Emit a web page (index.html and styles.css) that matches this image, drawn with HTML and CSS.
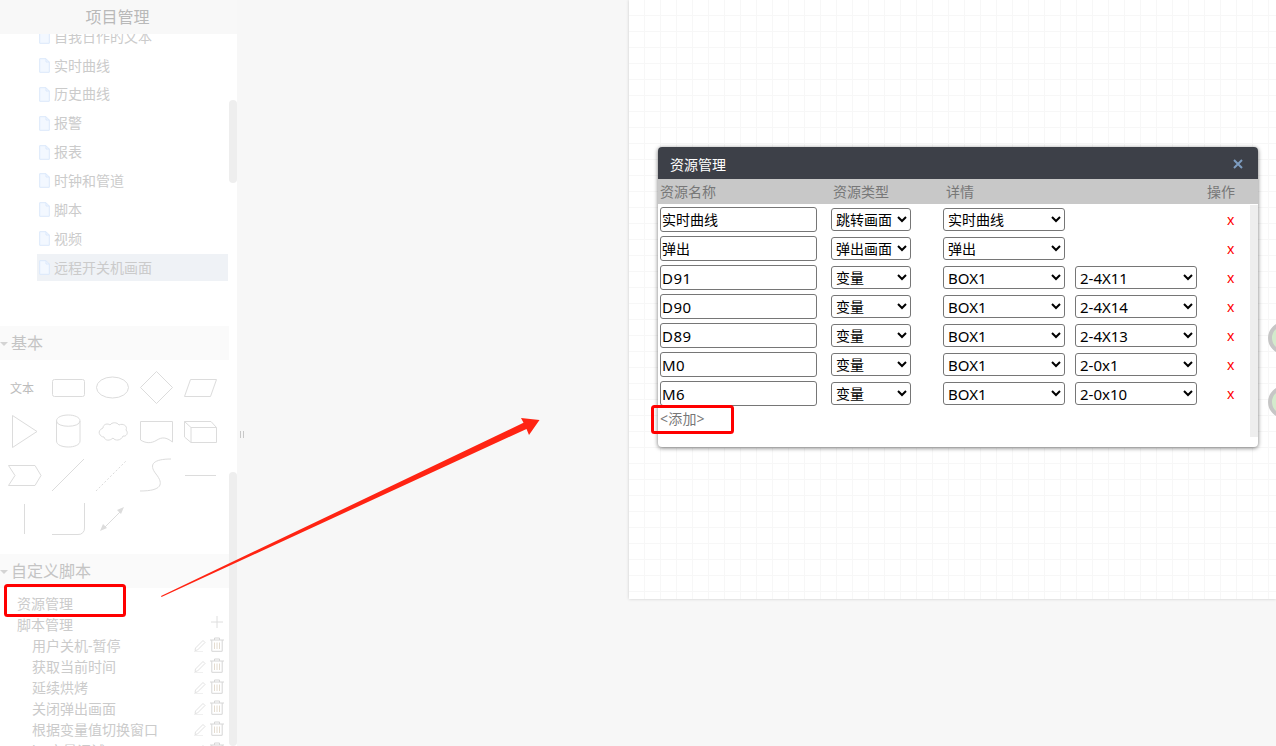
FILE: index.html
```html
<!DOCTYPE html>
<html lang="zh">
<head>
<meta charset="utf-8">
<title>资源管理</title>
<link rel="stylesheet" href="styles.css">
</head>
<body>
<svg class="defs" width="0" height="0" aria-hidden="true">
  <symbol id="doc" viewBox="0 0 11 15"><path d="M.7.7H7L10.3 4V14.3H.7Z" fill="#f3f8ff" stroke="#dbe8fb"/><path d="M7 .7V4H10.3" fill="none" stroke="#dbe8fb"/></symbol>
  <symbol id="pencil" viewBox="0 0 12 14"><path d="M1.5 10 9 2.5l2 2L3.500 12 1 12.500Z" fill="none" stroke="#e2e2e2"/><path d="M0 13.500H9" stroke="#f0f0f0"/></symbol>
  <symbol id="trash" viewBox="0 0 14 15"><path d="M0 3H14M4.500 3V1H9.500V3M1.800 3V14.300H12.200V3" fill="none" stroke="#d6d6d6"/><path d="M4.500 5.500V12M7 5.500V12M9.500 5.500V12" stroke="#e4dcd0"/></symbol>
</svg>
<div class="app">
  <aside class="sidebar">
    <header class="project-title">项目管理</header>
    <section class="tree">
      <ul class="tree-list">
        <li class="tree-item"><svg class="doc"><use href="#doc"/></svg>自我日作的文本</li>
        <li class="tree-item"><svg class="doc"><use href="#doc"/></svg>实时曲线</li>
        <li class="tree-item"><svg class="doc"><use href="#doc"/></svg>历史曲线</li>
        <li class="tree-item"><svg class="doc"><use href="#doc"/></svg>报警</li>
        <li class="tree-item"><svg class="doc"><use href="#doc"/></svg>报表</li>
        <li class="tree-item"><svg class="doc"><use href="#doc"/></svg>时钟和管道</li>
        <li class="tree-item"><svg class="doc"><use href="#doc"/></svg>脚本</li>
        <li class="tree-item"><svg class="doc"><use href="#doc"/></svg>视频</li>
        <li class="tree-item active"><svg class="doc"><use href="#doc"/></svg>远程开关机画面</li>
      </ul>
    </section>
    <h2 class="group-head"><span class="caret"></span>基本</h2>
    <div class="shapes">
      <div class="shape shape-text">文本</div>
      <svg class="shape" viewBox="0 0 44 44"><rect x="6.500" y="13.500" width="32" height="17" rx="2"/></svg>
      <svg class="shape" viewBox="0 0 44 44"><ellipse cx="22.500" cy="21.500" rx="16" ry="10.500"/></svg>
      <svg class="shape" viewBox="0 0 44 44"><path d="M6.500 21.500 22.500 5.500 38.500 21.500 22.500 37.500Z"/></svg>
      <svg class="shape" viewBox="0 0 44 44"><path d="M12.500 13.500H38.500L32.500 30.500H6.500Z"/></svg>

      <svg class="shape" viewBox="0 0 44 44"><path d="M10.500 5.500 35 21.500 10.500 37.500Z"/></svg>
      <svg class="shape" viewBox="0 0 44 44"><path d="M10.500 11V31C10.500 39 34 39 34 31V11C34 3 10.500 3 10.500 11C10.500 18 34 18 34 11"/></svg>
      <svg class="shape" viewBox="0 0 44 44"><path d="M13 18C13 14 18 13 20 15C22 12 27 12 29 15C33 13 38 16 36 20C39 23 36 27 33 26C31 31 25 31 23 28C20 31 15 31 14 27C10 27 6 21 13 18Z"/></svg>
      <svg class="shape" viewBox="0 0 44 44"><path d="M6.500 11.500H38.500V32C32 27 28 27 23 30C17 34 11 33 6.500 30Z"/></svg>
      <svg class="shape" viewBox="0 0 44 44"><path d="M6.500 11.500H33L38.500 17.500V32.500H13L6.500 27ZM6.500 11.500 13 17.500H38.500M13 17.500V32.500"/></svg>

      <svg class="shape" viewBox="0 0 44 44"><path d="M6.500 11.500H33L39 21.500 33 31.500H6.500L13 21.500Z"/></svg>
      <svg class="shape" viewBox="0 0 44 44"><path d="M6 37 38 5"/></svg>
      <svg class="shape" viewBox="0 0 44 44"><path stroke-dasharray="2 2" d="M6 37 37 6"/></svg>
      <svg class="shape" viewBox="0 0 44 44"><path d="M6 37C28 37 30 30 22 20C14 10 20 5 37 5"/></svg>
      <svg class="shape" viewBox="0 0 44 44"><path d="M7 21.500H38"/></svg>

      <svg class="shape" viewBox="0 0 44 44"><path d="M22.500 6V36"/></svg>
      <svg class="shape" viewBox="0 0 44 44"><path d="M6 36.500H32A6 6 0 0 0 38.500 30V5"/></svg>
      <svg class="shape" viewBox="0 0 44 44"><path d="M13 31 31 13"/><path class="solid" d="M34 9 27 12 31 16ZM10 33 17 30 13 26Z"/></svg>
    </div>
    <h2 class="group-head"><span class="caret"></span>自定义脚本</h2>
    <ul class="scripts">
      <li class="script-root">资源管理</li>
      <li class="script-root">脚本管理<svg class="plus" viewBox="0 0 12 12"><path d="M6 0V12M0 6H12"/></svg></li>
      <li class="script-item">用户关机-暂停<span class="tools"><svg class="pencil"><use href="#pencil"/></svg><svg class="trash"><use href="#trash"/></svg></span></li>
      <li class="script-item">获取当前时间<span class="tools"><svg class="pencil"><use href="#pencil"/></svg><svg class="trash"><use href="#trash"/></svg></span></li>
      <li class="script-item">延续烘烤<span class="tools"><svg class="pencil"><use href="#pencil"/></svg><svg class="trash"><use href="#trash"/></svg></span></li>
      <li class="script-item">关闭弹出画面<span class="tools"><svg class="pencil"><use href="#pencil"/></svg><svg class="trash"><use href="#trash"/></svg></span></li>
      <li class="script-item">根据变量值切换窗口<span class="tools"><svg class="pencil"><use href="#pencil"/></svg><svg class="trash"><use href="#trash"/></svg></span></li>
      <li class="script-item">bo变量调试<span class="tools"><svg class="pencil"><use href="#pencil"/></svg><svg class="trash"><use href="#trash"/></svg></span></li>
    </ul>
    <div class="thumb thumb-top"></div>
    <div class="thumb thumb-bottom"></div>
  </aside>
  <main class="stage">
    <div class="splitter"></div>
    <div class="canvas">
      <span class="node node-a"></span>
      <span class="node node-b"></span>
      <div class="modal">
        <div class="modal-title"><span>资源管理</span>
          <svg class="modal-close" viewBox="0 0 10 10"><path d="M1 1 9 9M9 1 1 9"/></svg>
        </div>
        <div class="res-row res-head">
          <span>资源名称</span><span class="pad">资源类型</span><span class="pad2">详情</span><span></span><span>操作</span>
        </div>
        <div class="modal-body">
          <div class="res-row">
            <input class="res-name" value="实时曲线">
            <select class="res-type"><option>跳转画面</option></select>
            <select class="res-sel"><option>实时曲线</option></select>
            <span></span><span class="del">x</span>
          </div>
          <div class="res-row">
            <input class="res-name" value="弹出">
            <select class="res-type"><option>弹出画面</option></select>
            <select class="res-sel"><option>弹出</option></select>
            <span></span><span class="del">x</span>
          </div>
          <div class="res-row">
            <input class="res-name latin" value="D91">
            <select class="res-type"><option>变量</option></select>
            <select class="res-sel latin"><option>BOX1</option></select>
            <select class="res-sel latin"><option>2-4X11</option></select>
            <span class="del">x</span>
          </div>
          <div class="res-row">
            <input class="res-name latin" value="D90">
            <select class="res-type"><option>变量</option></select>
            <select class="res-sel latin"><option>BOX1</option></select>
            <select class="res-sel latin"><option>2-4X14</option></select>
            <span class="del">x</span>
          </div>
          <div class="res-row">
            <input class="res-name latin" value="D89">
            <select class="res-type"><option>变量</option></select>
            <select class="res-sel latin"><option>BOX1</option></select>
            <select class="res-sel latin"><option>2-4X13</option></select>
            <span class="del">x</span>
          </div>
          <div class="res-row">
            <input class="res-name latin" value="M0">
            <select class="res-type"><option>变量</option></select>
            <select class="res-sel latin"><option>BOX1</option></select>
            <select class="res-sel latin"><option>2-0x1</option></select>
            <span class="del">x</span>
          </div>
          <div class="res-row">
            <input class="res-name latin" value="M6">
            <select class="res-type"><option>变量</option></select>
            <select class="res-sel latin"><option>BOX1</option></select>
            <select class="res-sel latin"><option>2-0x10</option></select>
            <span class="del">x</span>
          </div>
          <div class="res-add">&lt;添加&gt;</div>
          <div class="modal-scroll"></div>
        </div>
      </div>
    </div>
  </main>
</div>
<svg class="annotations" viewBox="0 0 1276 746" aria-hidden="true">
  <rect class="mark" x="5.500" y="585.500" width="119" height="30" rx="2"/>
  <rect class="mark" x="652.500" y="406.500" width="80" height="26" rx="2"/>
  <polygon class="arrow" points="161,596 523.500,422.800 521,418 539.500,420 529,435 526.500,429 161.500,597"/>
</svg>
</body>
</html>
```
FILE: styles.css
```css
* { box-sizing: border-box; }
html, body { margin: 0; height: 746px; overflow: hidden; }
body {
  position: relative;
  font-family: "Noto Sans", "Noto Sans CJK SC", sans-serif;
  font-size: 14px;
  background: #f7f7f7;
}
ul { list-style: none; margin: 0; padding: 0; }
.defs { position: absolute; }
.app { display: flex; height: 746px; }

/* sidebar */
.sidebar {
  position: relative;
  flex: 0 0 237px;
  height: 746px;
  overflow: hidden;
  background: #fff;
  color: #cbcbcb;
}
.project-title {
  height: 34px;
  padding-right: 2px;
  line-height: 34px;
  text-align: center;
  font-size: 16px;
  color: #b9b9b9;
  background: #f8f8f8;
}
.tree { height: 292px; overflow: hidden; }
.tree-list {
  display: flex;
  flex-direction: column;
  gap: 1.860px;
  margin-top: -10.830px;
  padding: 0 9px 0 37px;
}
.tree-item {
  display: flex;
  align-items: center;
  height: 27px;
  padding: 0 0 2px 2px;
}
.tree-item.active { background: #eff2f6; }
.doc { width: 11px; height: 15px; margin: 2px 4px 0 0; flex: none; }
.group-head {
  display: flex;
  align-items: center;
  width: 229px;
  height: 34px;
  margin: 0;
  padding-bottom: 2px;
  font-size: 16px;
  font-weight: 400;
  color: #c4c4c4;
  background: #fafafa;
}
.caret {
  width: 0;
  height: 0;
  margin: 3px 3px 0 0;
  border: 4px solid transparent;
  border-top: 4px solid #d4d4d4;
  border-bottom: 0;
  flex: none;
}
.shapes {
  display: grid;
  grid-template-columns: repeat(5, 44px);
  grid-auto-rows: 44px;
  height: 194px;
  padding: 6px 0 0 2px;
}
.shape { width: 44px; height: 44px; fill: none; stroke: #dcdcdc; stroke-width: 1; }
.shape .solid { fill: #dcdcdc; stroke: none; }
.shape-text {
  display: flex;
  align-items: center;
  padding-left: 8px;
  font-size: 12px;
  color: #bcbcbc;
}
.scripts { padding-top: 4px; }
.script-root, .script-item {
  position: relative;
  display: flex;
  align-items: center;
  height: 21px;
  padding-left: 17px;
}
.script-item { padding-left: 32px; }
.plus {
  position: absolute;
  left: 211px;
  top: 3px;
  width: 12px;
  height: 12px;
  fill: none;
  stroke: #dedede;
}
.tools {
  position: absolute;
  left: 194px;
  top: 3px;
  display: flex;
  align-items: center;
  gap: 4px;
}
.pencil { width: 12px; height: 14px; }
.trash { width: 14px; height: 15px; }
.thumb {
  position: absolute;
  left: 229px;
  width: 8px;
  border-radius: 4px;
  background: #eee;
}
.thumb-top { top: 100px; height: 83px; }
.thumb-bottom { top: 472px; height: 274px; }

/* stage */
.stage { position: relative; flex: 1; min-width: 0; padding-left: 392px; }
.splitter {
  position: absolute;
  left: 3px;
  top: 431px;
  width: 4px;
  height: 7px;
  border-left: 1px solid #c8c8c8;
  border-right: 1px solid #c8c8c8;
}
.canvas {
  position: relative;
  height: 599px;
  overflow: hidden;
  box-shadow: 0 0 3px rgba(0, 0, 0, .18);
  background-color: #fff;
  background-image:
    linear-gradient(to right, transparent 15px, #f7f7f7 15px, #f7f7f7 16px),
    linear-gradient(to bottom, transparent 15px, #f7f7f7 15px, #f7f7f7 16px);
  background-size: 16px 16px;
}
.node {
  position: absolute;
  left: 639px;
  width: 32px;
  height: 32px;
  border-radius: 50%;
  border: 4px solid #c6c6c6;
  background: #d3ebcc;
}
.node-a { top: 322px; }
.node-b { top: 386px; }

/* modal */
.modal {
  position: absolute;
  left: 29px;
  top: 147px;
  width: 600px;
  height: 300px;
  border-radius: 4px;
  overflow: hidden;
  background: #fff;
  box-shadow: 0 1px 4px rgba(0, 0, 0, .55);
}
.modal-title {
  display: flex;
  align-items: center;
  justify-content: space-between;
  height: 32px;
  padding: 1px 15px 0 12px;
  color: #fff;
  background: #3d4048;
}
.modal-close { width: 10px; height: 10px; fill: none; stroke: #7d9cc0; stroke-width: 2; }
.res-row {
  display: grid;
  grid-template-columns: 171px 112px 132px 132px 1fr;
  align-items: center;
  height: 29px;
  padding-left: 2px;
}
.res-head {
  height: 25px;
  padding-bottom: 2px;
  color: #777;
  background: #c8c8c8;
}
.pad { padding-left: 2px; }
.pad2 { padding-left: 3px; }
.modal-body { position: relative; height: 243px; padding-top: 1px; }
.res-name {
  width: 157px;
  height: 25px;
  padding: 0 1px 2px;
  font: inherit;
  color: #000;
  background: #fff;
  border: 1px solid #767676;
  border-radius: 3px;
}
.res-type, .res-sel {
  height: 23px;
  font: inherit;
  color: #000;
  background: #fff;
  border: 1px solid #767676;
  border-radius: 3px;
}
.res-type { width: 80px; }
.res-sel { width: 122px; }
.res-sel.latin { padding-bottom: 2px; font-size: 15px; }
.res-name.latin { padding-bottom: 0; font-size: 15px; letter-spacing: .5px; }
.del { padding-left: 20px; color: #f00; }
.res-add { padding-left: 2px; letter-spacing: .2px; color: #777; }
.modal-scroll {
  position: absolute;
  right: 0;
  top: 1px;
  bottom: 10px;
  width: 8px;
  background: #eee;
}

/* hand-drawn annotations over the screenshot */
.annotations {
  position: absolute;
  left: 0;
  top: 0;
  width: 1276px;
  height: 746px;
  pointer-events: none;
}
.mark { fill: none; stroke: #f00; stroke-width: 3; }
.arrow { fill: #ff2413; }
```
